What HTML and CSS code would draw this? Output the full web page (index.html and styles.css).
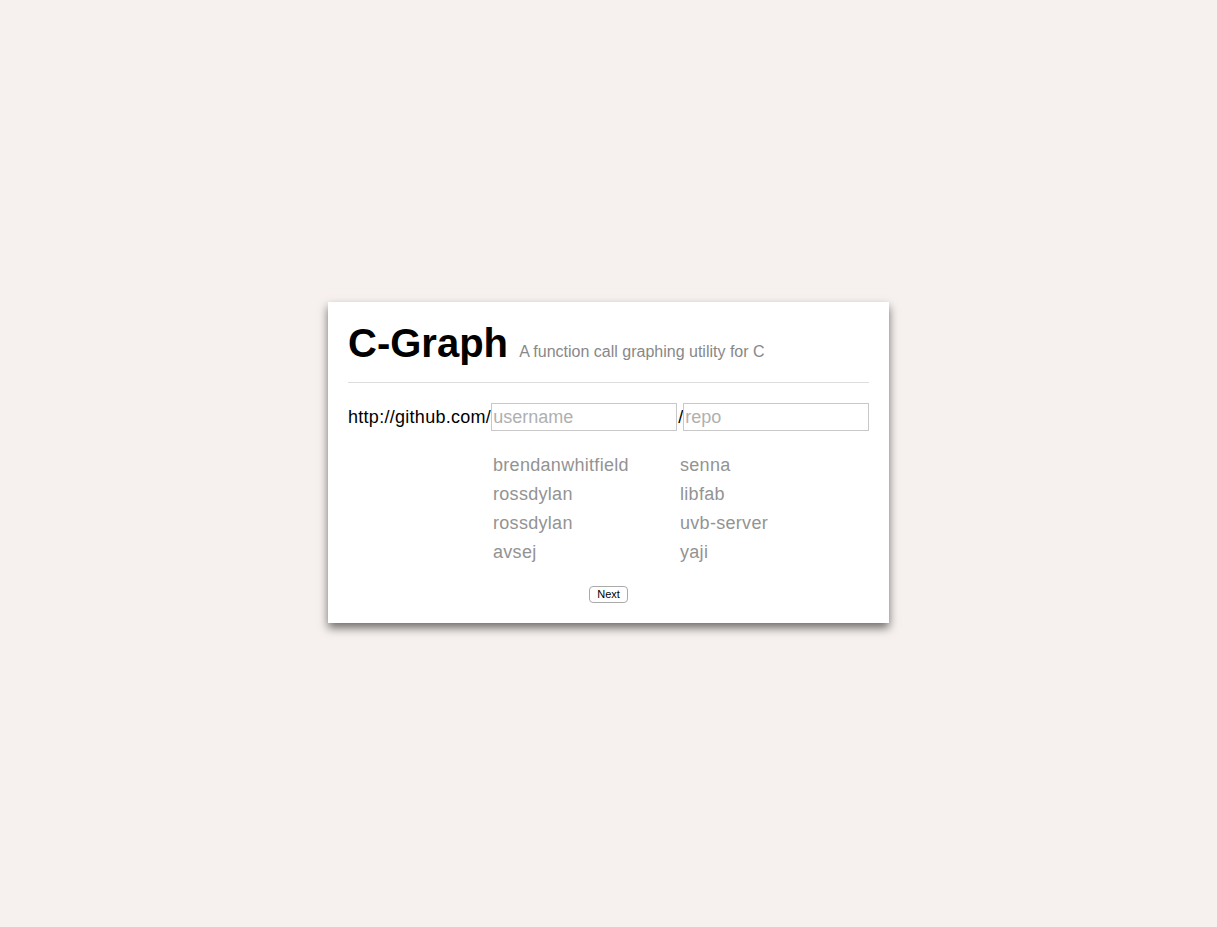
FILE: index.html
```html
<!DOCTYPE html>
<html>
<head>
<meta charset="utf-8">
<title>C-Graph</title>
<link rel="stylesheet" href="styles.css">
</head>
<body>
<main class="page">
  <section class="card">
    <h1 class="title">C-Graph <small class="subtitle">A function call graphing utility for C</small></h1>
    <hr class="rule">
    <form class="repo-form">
      <div class="repo-row">
        <span class="prefix">http://github.com/</span><input class="field" type="text" placeholder="username"><span class="slash">/</span><input class="field" type="text" placeholder="repo">
      </div>
      <div class="examples">
        <span class="ex">brendanwhitfield</span><span class="ex">senna</span>
        <span class="ex">rossdylan</span><span class="ex">libfab</span>
        <span class="ex">rossdylan</span><span class="ex">uvb-server</span>
        <span class="ex">avsej</span><span class="ex">yaji</span>
      </div>
      <div class="actions">
        <button class="btn" type="button">Next</button>
      </div>
    </form>
  </section>
</main>
</body>
</html>
```
FILE: styles.css
```css
html, body {
  margin: 0;
  padding: 0;
}
body {
  background: #f6f1ee;
  font-family: "Liberation Sans", Arial, sans-serif;
  color: #000;
}
.page {
  min-height: 927px;
  display: flex;
  justify-content: center;
  align-items: flex-start;
}
.card {
  margin-top: 302px;
  width: 521px;
  background: #fff;
  padding: 18px 20px 20px;
  box-shadow: 0 5px 9px rgba(0, 0, 0, 0.55);
}
.title {
  margin: 0;
  font-size: 40px;
  line-height: 46px;
  font-weight: bold;
}
.subtitle {
  font-size: 16px;
  line-height: 16px;
  font-weight: normal;
  color: #888;
}
.rule {
  border: 0;
  border-top: 1px solid #ddd;
  margin: 16px 0 20px;
  height: 0;
}
.repo-form {
  margin: 0;
}
.repo-row {
  display: flex;
  align-items: center;
  font-size: 18px;
  height: 28px;
}
.prefix {
  display: block;
  letter-spacing: 0.28px;
}
.slash {
  display: block;
  margin: 0 0 0 1px;
}
.field {
  width: 186px;
  height: 28px;
  box-sizing: border-box;
  border: 1px solid #c8c8c8;
  border-radius: 0;
  padding: 0 1px;
  margin: 0;
  font-family: "Liberation Sans", Arial, sans-serif;
  font-size: 18px;
  color: #000;
  outline: none;
}
.field::placeholder {
  color: #b0b0b0;
}
.examples {
  display: grid;
  grid-template-columns: 187px 187px;
  margin: 20px 0 0 145px;
  font-size: 18px;
  line-height: 29px;
  letter-spacing: 0.3px;
  color: #939393;
}
.actions {
  display: flex;
  justify-content: center;
  margin-top: 19px;
}
.btn {
  font-family: "Liberation Sans", Arial, sans-serif;
  font-size: 11px;
  height: 17px;
  width: 39px;
  padding: 0;
  background: #fff;
  border: 1px solid #aaa;
  border-radius: 4px;
  color: #000;
  line-height: 15px;
}
```
